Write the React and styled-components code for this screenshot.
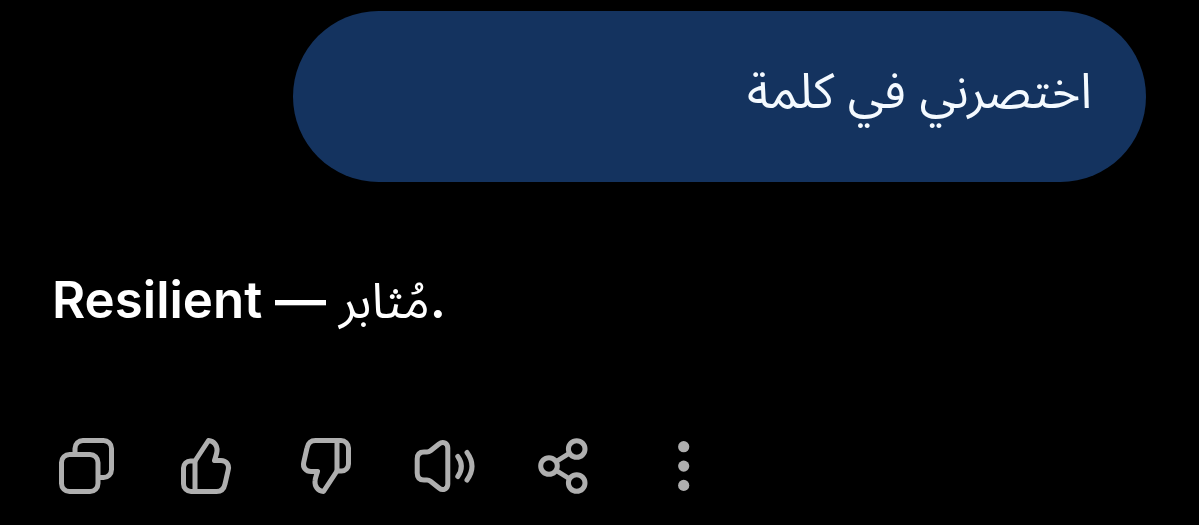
import React from "react";
import styled, { createGlobalStyle } from "styled-components";

const GlobalStyle = createGlobalStyle`
  body {
    margin: 0;
    background: #000;
    color: #fff;
    font-family: "Inter", "Noto Sans Arabic", "Noto Naskh Arabic", "DejaVu Sans", sans-serif;
  }
`;

const Chat = styled.main`
  display: flex;
  flex-direction: column;
  padding: 11px 53px 24px 52px;
`;

const UserBubble = styled.div`
  align-self: flex-end;
  box-sizing: border-box;
  width: 78%;
  padding: 48px 54px 59px;
  border-radius: 86px;
  background: #14335f;
  color: #f4faff;
  font-size: 49px;
  line-height: 64px;
  text-align: start;
`;

const Reply = styled.p`
  margin: 76px 0 92px;
  font-size: 51px;
  font-weight: 600;
  line-height: 84px;

  span {
    font-size: 49px;
    font-weight: 400;
    line-height: 49px;
  }
`;

const Actions = styled.div`
  display: flex;
  gap: 56px;
  padding-left: 2px;
`;

const ActionButton = styled.button`
  width: 64px;
  height: 64px;
  padding: 0;
  border: 0;
  background: none;
  color: #afafaf;
  cursor: pointer;

  svg {
    display: block;
    width: 100%;
    height: 100%;
  }
`;

const Icon = ({ children }) => (
  <svg
    viewBox="0 0 64 64"
    fill="none"
    stroke="currentColor"
    strokeWidth="5"
    strokeLinecap="round"
    strokeLinejoin="round"
    aria-hidden="true"
  >
    {children}
  </svg>
);

const Thumb = () => (
  <>
    <path d="M21 27 L34.5 6.5 C40 7 43.5 11.5 43 17 C42.8 20 41.5 23 40.5 26.5 H47 C52 26.5 55.5 30.5 54.3 35.5 L51 50 C50 55 47 57.5 42.5 57.5 H17 A7.5 7.5 0 0 1 9.5 50 V34 A7 7 0 0 1 16.5 27 Z" />
    <path d="M21 27 V57" />
  </>
);

const actions = [
  {
    label: "Copy",
    icon: (
      <>
        <rect x="7.5" y="20.5" width="36.5" height="37" rx="8" />
        <path d="M21 20 V14.5 A8 8 0 0 1 29 6.5 H49.5 A8 8 0 0 1 57.5 14.5 V35.5 A8 8 0 0 1 49.5 43.5 H45" />
      </>
    ),
  },
  { label: "Good response", icon: <Thumb /> },
  {
    label: "Bad response",
    icon: (
      <g transform="rotate(180 32 32)">
        <Thumb />
      </g>
    ),
  },
  {
    label: "Read aloud",
    icon: (
      <>
        <path d="M10 18 H13 Q15 18 16.5 16.8 L25 10 Q28 7.5 31 9 Q33.8 10.5 33.8 14 V50 Q33.8 53.5 31 55 Q28 56.5 25 54 L16.5 47.2 Q15 46 13 46 H10 Q3.2 46 3.2 39 V25 Q3.2 18 10 18 Z" />
        <path d="M43.8 22.5 Q51 32.3 43.8 42.5" />
        <path d="M53 18.5 Q63 32.3 53 46" />
      </>
    ),
  },
  {
    label: "Share",
    icon: (
      <>
        <circle cx="15" cy="32" r="8.3" />
        <circle cx="42.7" cy="15" r="8.3" />
        <circle cx="42.7" cy="49" r="8.3" />
        <path d="M23 27 L35 19.5 M23 37 L35 44.5" />
      </>
    ),
  },
  {
    label: "More",
    icon: (
      <g fill="currentColor" stroke="none">
        <circle cx="29.7" cy="12.7" r="5.6" />
        <circle cx="29.7" cy="32.1" r="5.6" />
        <circle cx="29.7" cy="51.4" r="5.6" />
      </g>
    ),
  },
];

const App = () => {
  return (
    <>
      <GlobalStyle />
      <Chat>
        <UserBubble dir="rtl" lang="ar">
          اختصرني في كلمة
        </UserBubble>
        <Reply>
          Resilient — <span lang="ar">مُثابر</span>.
        </Reply>
        <Actions>
          {actions.map(({ label, icon }) => (
            <ActionButton key={label} type="button" aria-label={label}>
              <Icon>{icon}</Icon>
            </ActionButton>
          ))}
        </Actions>
      </Chat>
    </>
  );
};

export default App;
